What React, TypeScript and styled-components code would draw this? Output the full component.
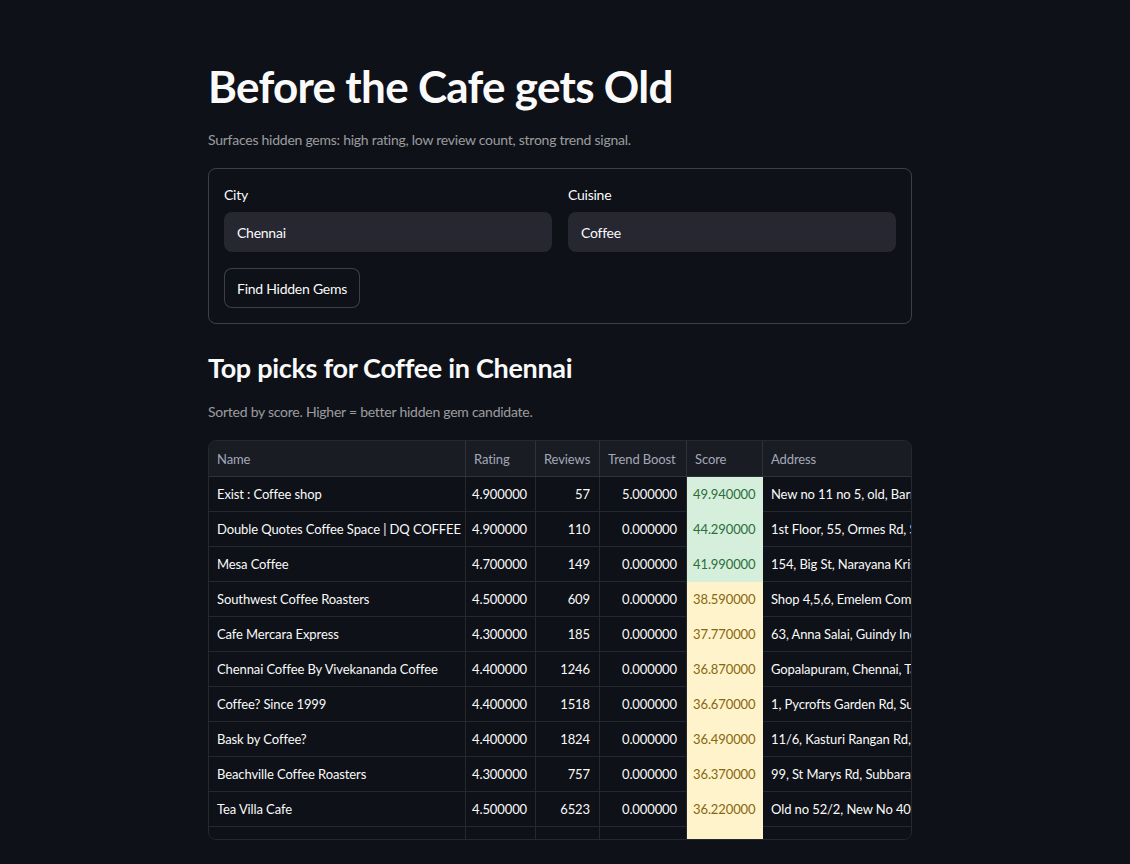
import React, { useState } from 'react'
import styled, { createGlobalStyle } from 'styled-components'

const GlobalStyle = createGlobalStyle`
  html, body {
    margin: 0;
    padding: 0;
    background: #0e1117;
    color: #fafafa;
    font-family: Lato, "Noto Sans", sans-serif;
    letter-spacing: -0.25px;
  }
`

const Page = styled.main`
  min-height: 864px;
  overflow: hidden;
`

const Block = styled.div`
  width: 704px;
  margin-left: 208px;
  padding-top: 58px;
  display: flex;
  flex-direction: column;
`

const Title = styled.h1`
  margin: 0;
  font-size: 44px;
  font-weight: 700;
  line-height: 56px;
  letter-spacing: -0.7px;
`

const Caption = styled.p<{ gap?: number }>`
  margin: ${props => props.gap ?? 12}px 0 0;
  font-size: 14px;
  line-height: 20px;
  color: rgba(250, 250, 250, 0.6);
`

const FormBox = styled.form`
  margin-top: 18px;
  border: 1px solid rgba(250, 250, 250, 0.2);
  border-radius: 8px;
  padding: 15px;
  display: flex;
  flex-direction: column;
  gap: 16px;
`

const Fields = styled.div`
  display: grid;
  grid-template-columns: 1fr 1fr;
  gap: 16px;
`

const Field = styled.label`
  display: flex;
  flex-direction: column;
  gap: 7px;
  font-size: 14px;
  line-height: 21px;
`

const Input = styled.input`
  height: 40px;
  box-sizing: border-box;
  border: 1px solid transparent;
  border-radius: 8px;
  background: #262730;
  color: #fafafa;
  padding: 0 12px;
  font: inherit;
  font-size: 14px;
  letter-spacing: -0.25px;
  outline: none;
`

const Button = styled.button`
  align-self: flex-start;
  height: 40px;
  padding: 0 12px;
  border: 1px solid rgba(250, 250, 250, 0.2);
  border-radius: 8px;
  background: #0e1117;
  color: #fafafa;
  font: inherit;
  font-size: 14px;
  letter-spacing: -0.25px;
  cursor: pointer;
`

const Heading = styled.h2`
  margin: 24px 0 0;
  font-size: 27px;
  font-weight: 700;
  line-height: 40px;
  letter-spacing: -0.3px;
`

const TableFrame = styled.div`
  margin-top: 18px;
  height: 400px;
  box-sizing: border-box;
  border: 1px solid rgba(250, 250, 250, 0.1);
  border-radius: 8px;
  overflow: hidden;
`

const Grid = styled.table`
  border-collapse: separate;
  border-spacing: 0;
  table-layout: fixed;
  width: 1000px;
  font-size: 13px;
  letter-spacing: -0.1px;
`

const HeadCell = styled.th`
  height: 36px;
  box-sizing: border-box;
  background: #1a1c24;
  color: #a3a8b8;
  font-weight: 400;
  text-align: left;
  padding: 0 8px;
  border-right: 1px solid rgba(250, 250, 250, 0.1);
  border-bottom: 1px solid rgba(250, 250, 250, 0.1);
  white-space: nowrap;
  overflow: hidden;
`

type Tone = 'plain' | 'good' | 'fair'

const tones: Record<Tone, { bg: string; fg: string }> = {
  plain: { bg: '#0e1117', fg: '#fafafa' },
  good: { bg: '#d6efdc', fg: '#2b6e3a' },
  fair: { bg: '#fff3cc', fg: '#86670f' },
}

const Cell = styled.td<{ $num?: boolean; $tone?: Tone }>`
  height: 35px;
  box-sizing: border-box;
  padding: ${props => (props.$num ? '0 9px 0 6px' : '0 8px')};
  background: ${props => tones[props.$tone ?? 'plain'].bg};
  color: ${props => tones[props.$tone ?? 'plain'].fg};
  text-align: ${props => (props.$num ? 'right' : 'left')};
  border-right: 1px solid rgba(250, 250, 250, 0.1);
  border-bottom: 1px solid rgba(250, 250, 250, 0.1);
  white-space: nowrap;
  overflow: hidden;
`

interface Gem {
  name: string
  rating: number
  reviews: number
  trend: number
  score: number
  address: string
}

const GEMS: Gem[] = [
  { name: 'Exist : Coffee shop', rating: 4.9, reviews: 57, trend: 5, score: 49.94, address: 'New no 11 no 5, old, Barnaby Rd, Kilpauk, Chennai' },
  { name: 'Double Quotes Coffee Space | DQ COFFEE', rating: 4.9, reviews: 110, trend: 0, score: 44.29, address: '1st Floor, 55, Ormes Rd, Secretariat Colony, Chennai' },
  { name: 'Mesa Coffee', rating: 4.7, reviews: 149, trend: 0, score: 41.99, address: '154, Big St, Narayana Krishnaraja Puram, Chennai' },
  { name: 'Southwest Coffee Roasters', rating: 4.5, reviews: 609, trend: 0, score: 38.59, address: 'Shop 4,5,6, Emelem Complex, Chennai' },
  { name: 'Cafe Mercara Express', rating: 4.3, reviews: 185, trend: 0, score: 37.77, address: '63, Anna Salai, Guindy Industrial Estate, Chennai' },
  { name: 'Chennai Coffee By Vivekananda Coffee', rating: 4.4, reviews: 1246, trend: 0, score: 36.87, address: 'Gopalapuram, Chennai, Tamil Nadu' },
  { name: 'Coffee? Since 1999', rating: 4.4, reviews: 1518, trend: 0, score: 36.67, address: '1, Pycrofts Garden Rd, Subba Road Avenue, Chennai' },
  { name: 'Bask by Coffee?', rating: 4.4, reviews: 1824, trend: 0, score: 36.49, address: '11/6, Kasturi Rangan Rd, Alwarpet, Chennai' },
  { name: 'Beachville Coffee Roasters', rating: 4.3, reviews: 757, trend: 0, score: 36.37, address: '99, St Marys Rd, Subbarayan Nagar, Chennai' },
  { name: 'Tea Villa Cafe', rating: 4.5, reviews: 6523, trend: 0, score: 36.22, address: 'Old no 52/2, New No 40, Chamiers Rd, Chennai' },
  { name: 'Ciclo Cafe', rating: 4.3, reviews: 2310, trend: 0, score: 36.1, address: '10, 17, Gandhi Nagar, Adyar, Chennai' },
]

const COLUMNS: { label: string; width: number }[] = [
  { label: 'Name', width: 257 },
  { label: 'Rating', width: 70 },
  { label: 'Reviews', width: 64 },
  { label: 'Trend Boost', width: 87 },
  { label: 'Score', width: 76 },
  { label: 'Address', width: 446 },
]

const fixed = (n: number) => n.toFixed(6)

function GemTable (props: { rows: Gem[] }) {
  return (
    <TableFrame>
      <Grid>
        <colgroup>
          {COLUMNS.map(c => <col key={c.label} style={{ width: c.width }} />)}
        </colgroup>
        <thead>
          <tr>
            {COLUMNS.map(c => <HeadCell key={c.label}>{c.label}</HeadCell>)}
          </tr>
        </thead>
        <tbody>
          {props.rows.map(it => (
            <tr key={it.name}>
              <Cell>{it.name}</Cell>
              <Cell $num>{fixed(it.rating)}</Cell>
              <Cell $num>{it.reviews}</Cell>
              <Cell $num>{fixed(it.trend)}</Cell>
              <Cell $num $tone={it.score >= 40 ? 'good' : 'fair'}>{fixed(it.score)}</Cell>
              <Cell>{it.address}</Cell>
            </tr>
          ))}
        </tbody>
      </Grid>
    </TableFrame>
  )
}

export default function App () {
  const [city, setCity] = useState('Chennai')
  const [cuisine, setCuisine] = useState('Coffee')

  return (
    <Page>
      <GlobalStyle />
      <Block>
        <Title>Before the Cafe gets Old</Title>
        <Caption gap={16}>Surfaces hidden gems: high rating, low review count, strong trend signal.</Caption>
        <FormBox onSubmit={ev => ev.preventDefault()}>
          <Fields>
            <Field>
              City
              <Input value={city} onChange={ev => setCity(ev.target.value)} />
            </Field>
            <Field>
              Cuisine
              <Input value={cuisine} onChange={ev => setCuisine(ev.target.value)} />
            </Field>
          </Fields>
          <Button type="submit">Find Hidden Gems</Button>
        </FormBox>
        <Heading>Top picks for Coffee in Chennai</Heading>
        <Caption gap={14}>Sorted by score. Higher = better hidden gem candidate.</Caption>
        <GemTable rows={GEMS} />
      </Block>
    </Page>
  )
}
